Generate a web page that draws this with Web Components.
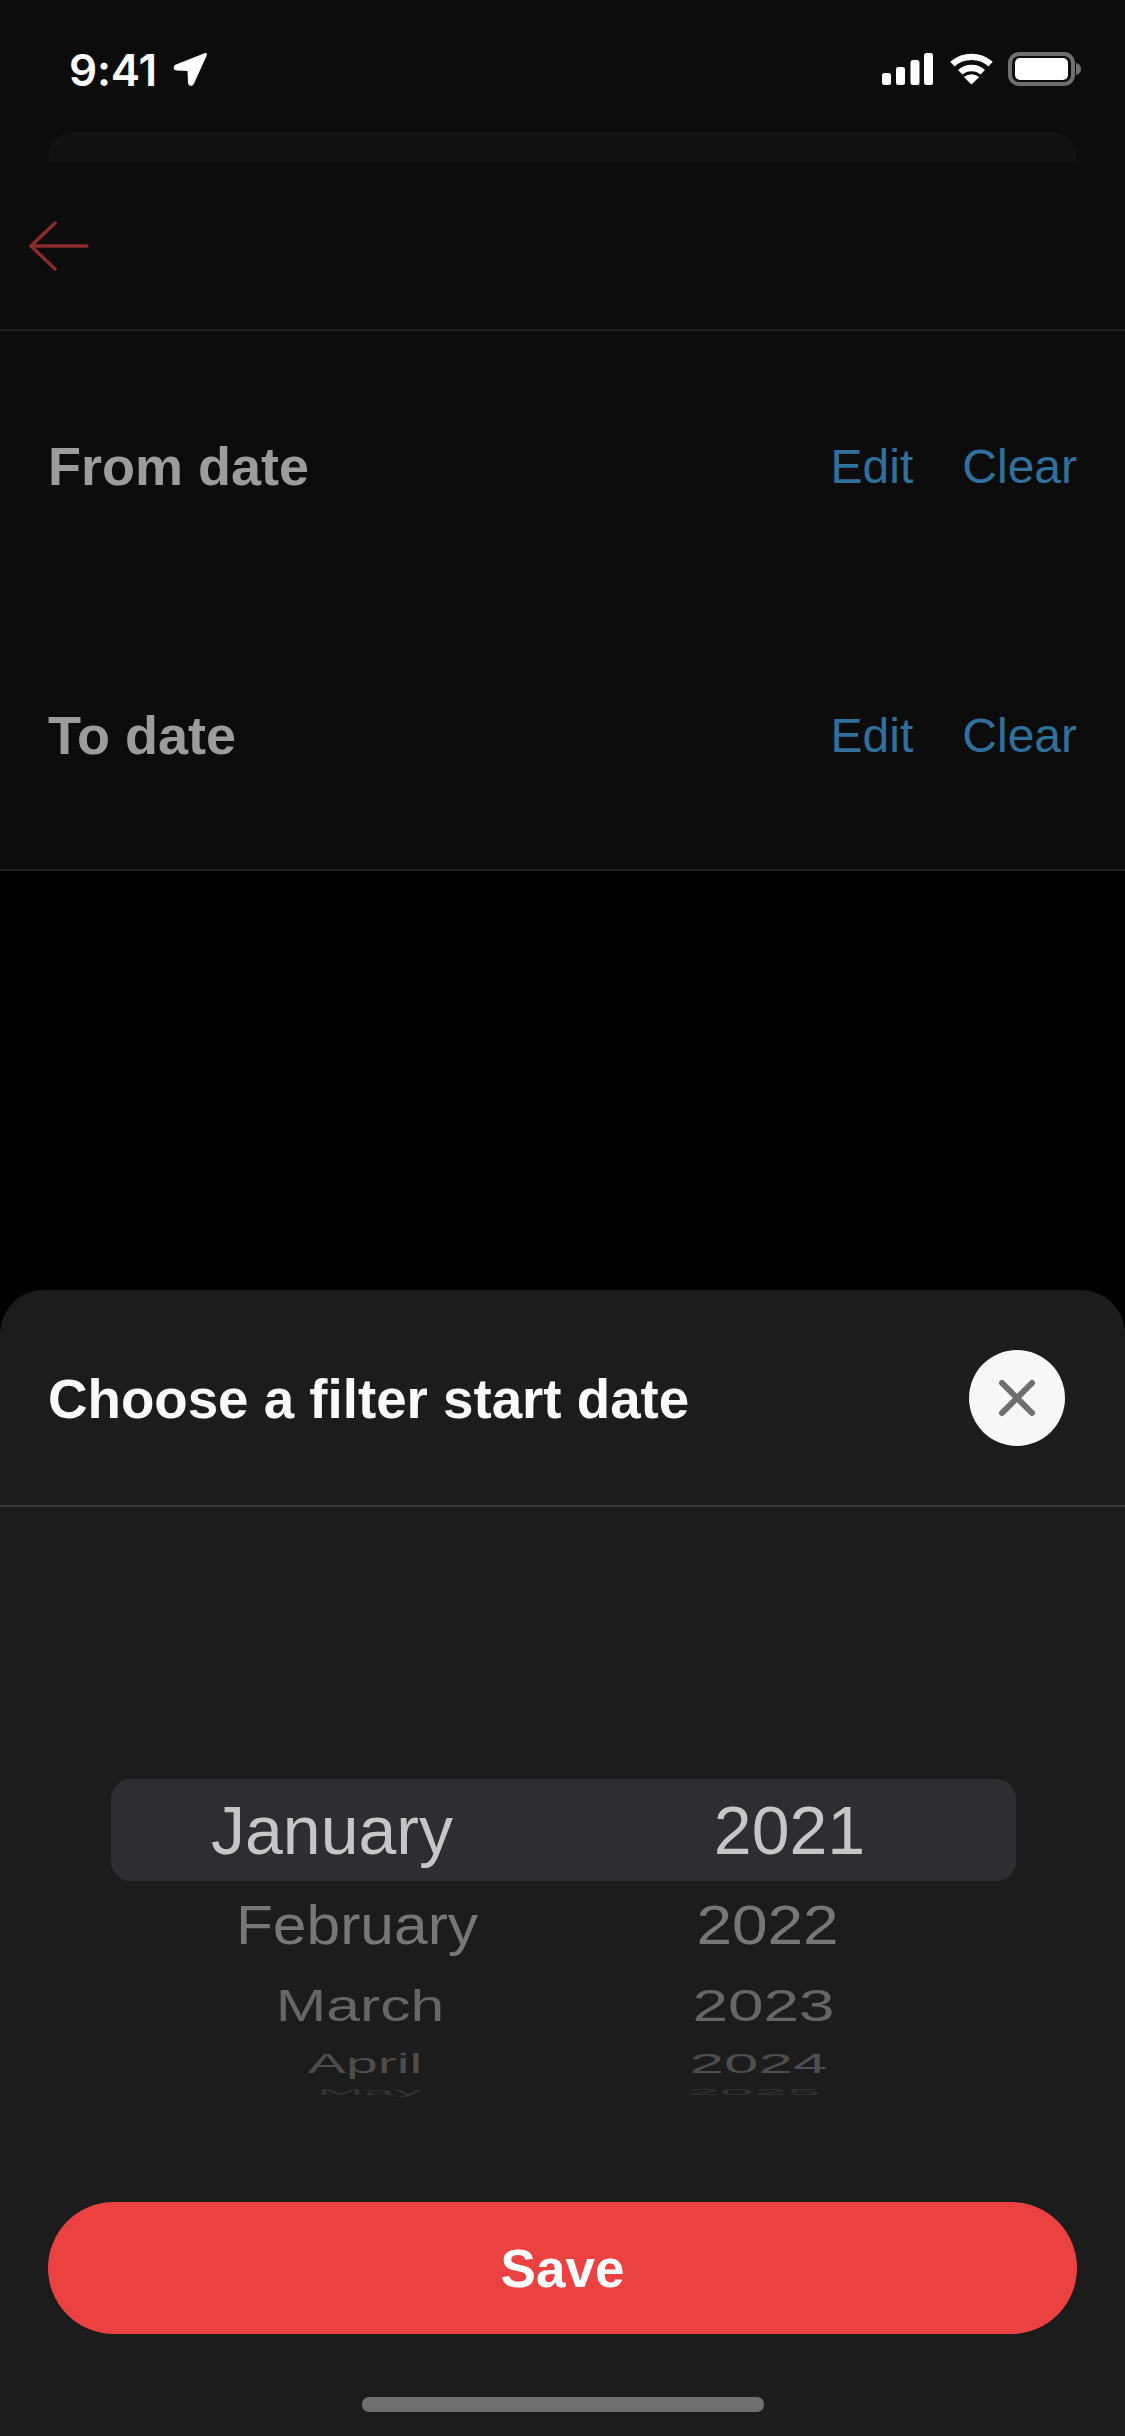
<!DOCTYPE html>
<html lang="en">
<head>
<meta charset="utf-8">
<title>Choose a filter start date</title>
<style>
    html, body { margin: 0; padding: 0; background: #000; }
    body { font-family: 'Liberation Sans', Arial, sans-serif; }
</style>
</head>
<body>
<app-screen>
    <status-bar slot="top" time="9:41"></status-bar>
    <nav-header slot="top"></nav-header>
    <date-row slot="top" label="From date"></date-row>
    <date-row slot="top" label="To date" last></date-row>
    <bottom-sheet slot="sheet" heading="Choose a filter start date">
        <wheel-picker></wheel-picker>
        <primary-button slot="footer">Save</primary-button>
    </bottom-sheet>
</app-screen>

<script>
class AppScreen extends HTMLElement {
    constructor() {
        super();
        this.attachShadow({ mode: 'open' });
        this.shadowRoot.innerHTML = `
            <style>
                :host {
                    display: flex;
                    flex-direction: column;
                    width: 1125px;
                    height: 2436px;
                    background: #000;
                    overflow: hidden;
                }
                .dimmed { background: #0c0c0c; display: flex; flex-direction: column; }
                .gap { flex: 1; }
            </style>
            <div class="dimmed"><slot name="top"></slot></div>
            <div class="gap"></div>
            <slot name="sheet"></slot>
        `;
    }
}

class StatusBar extends HTMLElement {
    constructor() {
        super();
        this.attachShadow({ mode: 'open' });
        this.shadowRoot.innerHTML = `
            <style>
                :host {
                    display: flex;
                    justify-content: space-between;
                    align-items: flex-start;
                    height: 132px;
                    box-sizing: border-box;
                    padding: 52px 43px 0 69px;
                    color: #fff;
                }
                .left { display: flex; align-items: center; gap: 16px; }
                .time {
                    font-family: Inter, sans-serif;
                    font-size: 44px;
                    font-weight: 600;
                    line-height: 34px;
                    letter-spacing: -0.2px;
                }
                .right { display: flex; align-items: flex-start; gap: 15px; padding-top: 1px; }
                .wifi { margin: 0 -1px 0 1px; }
                .battery { margin-top: -1px; }
                svg { display: block; }
            </style>
            <div class="left">
                <span class="time">${this.getAttribute('time')}</span>
                <svg width="35" height="35" viewBox="0 0 35 35"><path fill="#fff" d="M31.500 1.200 3 12.500C-.5 14 0 18.500 4 18.500L14.500 19 15 30.500C15.200 34.500 19.500 35 21 31.500L33.500 4C34.500 1.500 33.500.4 31.500 1.200Z"/></svg>
            </div>
            <div class="right">
                <svg width="51" height="32" viewBox="0 0 51 32" fill="#fff">
                    <rect x="0" y="20" width="9" height="12" rx="2.500"/>
                    <rect x="14" y="14" width="9" height="18" rx="2.500"/>
                    <rect x="28.500" y="7" width="9" height="25" rx="2.500"/>
                    <rect x="42" y="0" width="9" height="32" rx="2.500"/>
                </svg>
                <svg class="wifi" width="45" height="32" viewBox="0 0 45 33" preserveAspectRatio="none">
                    <path fill="none" stroke="#fff" stroke-width="6.500" d="M3.400 11.500A28 28 0 0 1 41.600 11.500"/>
                    <path fill="none" stroke="#fff" stroke-width="6.500" d="M11.250 19.900A16.500 16.500 0 0 1 33.750 19.900"/>
                    <path fill="#fff" d="M22.500 32.500 14.800 24.800Q22.500 18.800 30.200 24.800Z"/>
                </svg>
                <svg class="battery" width="74" height="34" viewBox="0 0 74 34">
                    <rect x="2" y="2" width="63" height="30" rx="9" fill="none" stroke="#6f6f6f" stroke-width="4"/>
                    <rect x="7" y="6" width="53" height="22" rx="5" fill="#fff"/>
                    <path fill="#6f6f6f" d="M68 11c3 .5 5 3 5 6s-2 5.500-5 6Z"/>
                </svg>
            </div>
        `;
    }
}

class NavHeader extends HTMLElement {
    constructor() {
        super();
        this.attachShadow({ mode: 'open' });
        this.shadowRoot.innerHTML = `
            <style>
                :host { display: block; }
                .stub {
                    height: 30px;
                    margin: 0 48px;
                    background: #121212;
                    border-radius: 26px 26px 0 0;
                }
                .bar {
                    display: flex;
                    align-items: center;
                    height: 167px;
                    padding-left: 29px;
                    border-bottom: 2px solid #222;
                }
                svg { display: block; margin-top: 1px; }
            </style>
            <div class="stub"></div>
            <div class="bar">
                <svg width="62" height="52" viewBox="0 0 62 52" fill="none" stroke="#8a2a2a" stroke-width="3.500" stroke-linecap="round" stroke-linejoin="round">
                    <path d="M26 3 2 26l24 23"/>
                    <path d="M2 26h56"/>
                </svg>
            </div>
        `;
    }
}

class DateRow extends HTMLElement {
    constructor() {
        super();
        this.attachShadow({ mode: 'open' });
        this.shadowRoot.innerHTML = `
            <style>
                :host {
                    display: flex;
                    align-items: center;
                    justify-content: space-between;
                    height: 270px;
                    box-sizing: border-box;
                    padding: 0 48px;
                }
                :host([last]) { border-bottom: 2px solid #222; }
                .label { font-size: 54px; font-weight: 700; color: #9c9c9c; }
                .actions { display: flex; gap: 49px; font-size: 48px; color: #30709d; }
            </style>
            <span class="label">${this.getAttribute('label')}</span>
            <span class="actions"><span>Edit</span><span>Clear</span></span>
        `;
    }
}

class BottomSheet extends HTMLElement {
    constructor() {
        super();
        this.attachShadow({ mode: 'open' });
        this.shadowRoot.innerHTML = `
            <style>
                :host {
                    display: flex;
                    flex-direction: column;
                    height: 1146px;
                    background: #1c1c1c;
                    border-radius: 44px 44px 0 0;
                    color: #fff;
                }
                .head {
                    display: flex;
                    align-items: center;
                    justify-content: space-between;
                    height: 215px;
                    padding: 0 60px 0 48px;
                    border-bottom: 2px solid #383838;
                }
                h2 { margin: 2px 0 0; font-size: 54.700px; font-weight: 700; color: #fafafa; }
                .close {
                    display: flex;
                    align-items: center;
                    justify-content: center;
                    width: 96px;
                    height: 96px;
                    border-radius: 50%;
                    background: #f7f7f7;
                }
                .body { flex: 1; padding: 272px 109px 0 111px; }
                .foot { padding: 0 48px; }
                .home {
                    width: 402px;
                    height: 15px;
                    margin: 63px auto 24px;
                    border-radius: 7px;
                    background: #6f6f6f;
                }
                svg { display: block; }
            </style>
            <div class="head">
                <h2>${this.getAttribute('heading')}</h2>
                <div class="close">
                    <svg width="38" height="38" viewBox="0 0 38 38" stroke="#6e6e6e" stroke-width="6" stroke-linecap="round">
                        <path d="M4 4l30 30M34 4 4 34"/>
                    </svg>
                </div>
            </div>
            <div class="body"><slot></slot></div>
            <div class="foot">
                <slot name="footer"></slot>
                <div class="home"></div>
            </div>
        `;
    }
}

class WheelPicker extends HTMLElement {
    constructor() {
        super();
        this.attachShadow({ mode: 'open' });
        // each row: squashed and shifted by hand, like the wheel's perspective
        const rows = [
            { month: 'January', year: '2021', h: 102, color: '#c6c6c6', mc: 332, yc: 789.5, sx: 1, ysx: 1, sy: 1, on: true },
            { month: 'February', year: '2022', h: 85, color: '#777', mc: 357, yc: 767.5, sx: 0.89, ysx: 0.94, sy: 0.82 },
            { month: 'March', year: '2023', h: 77, color: '#666', mc: 360, yc: 763.5, sx: 0.893, ysx: 0.94, sy: 0.66 },
            { month: 'April', year: '2024', h: 39, color: '#4d4d4d', mc: 365, yc: 758.5, sx: 0.84, ysx: 0.91, sy: 0.42 },
            { month: 'May', year: '2025', h: 19, color: '#333', mc: 370, yc: 753.5, sx: 0.82, ysx: 0.89, sy: 0.14 }
        ];
        this.shadowRoot.innerHTML = `
            <style>
                :host { display: block; font-size: 68px; }
                .row {
                    display: grid;
                    grid-template-columns: 451px 1fr;
                    grid-template-rows: 100%;
                    align-items: center;
                    border-radius: 20px;
                    line-height: 1;
                }
                .row.on { background: #2e2e30; }
                .cell { display: block; text-align: center; white-space: nowrap; }
            </style>
            ${rows.map(row => `
                <div class="row ${row.on ? 'on' : ''}" style="height:${row.h}px;color:${row.color}">
                    <span class="cell" style="transform:translateX(${row.mc - 111 - 225.5}px) scale(${row.sx},${row.sy})">${row.month}</span>
                    <span class="cell" style="transform:translateX(${row.yc - 111 - 451 - 227}px) scale(${row.ysx},${row.sy})">${row.year}</span>
                </div>
            `).join('')}
        `;
    }
}

class PrimaryButton extends HTMLElement {
    constructor() {
        super();
        this.attachShadow({ mode: 'open' });
        this.shadowRoot.innerHTML = `
            <style>
                :host {
                    display: flex;
                    align-items: center;
                    justify-content: center;
                    height: 132px;
                    border-radius: 66px;
                    background: #ec4141;
                    color: #fff;
                    font-size: 53px;
                    font-weight: 700;
                }
            </style>
            <slot></slot>
        `;
    }
}

customElements.define('app-screen', AppScreen);
customElements.define('status-bar', StatusBar);
customElements.define('nav-header', NavHeader);
customElements.define('date-row', DateRow);
customElements.define('bottom-sheet', BottomSheet);
customElements.define('wheel-picker', WheelPicker);
customElements.define('primary-button', PrimaryButton);
</script>
</body>
</html>
